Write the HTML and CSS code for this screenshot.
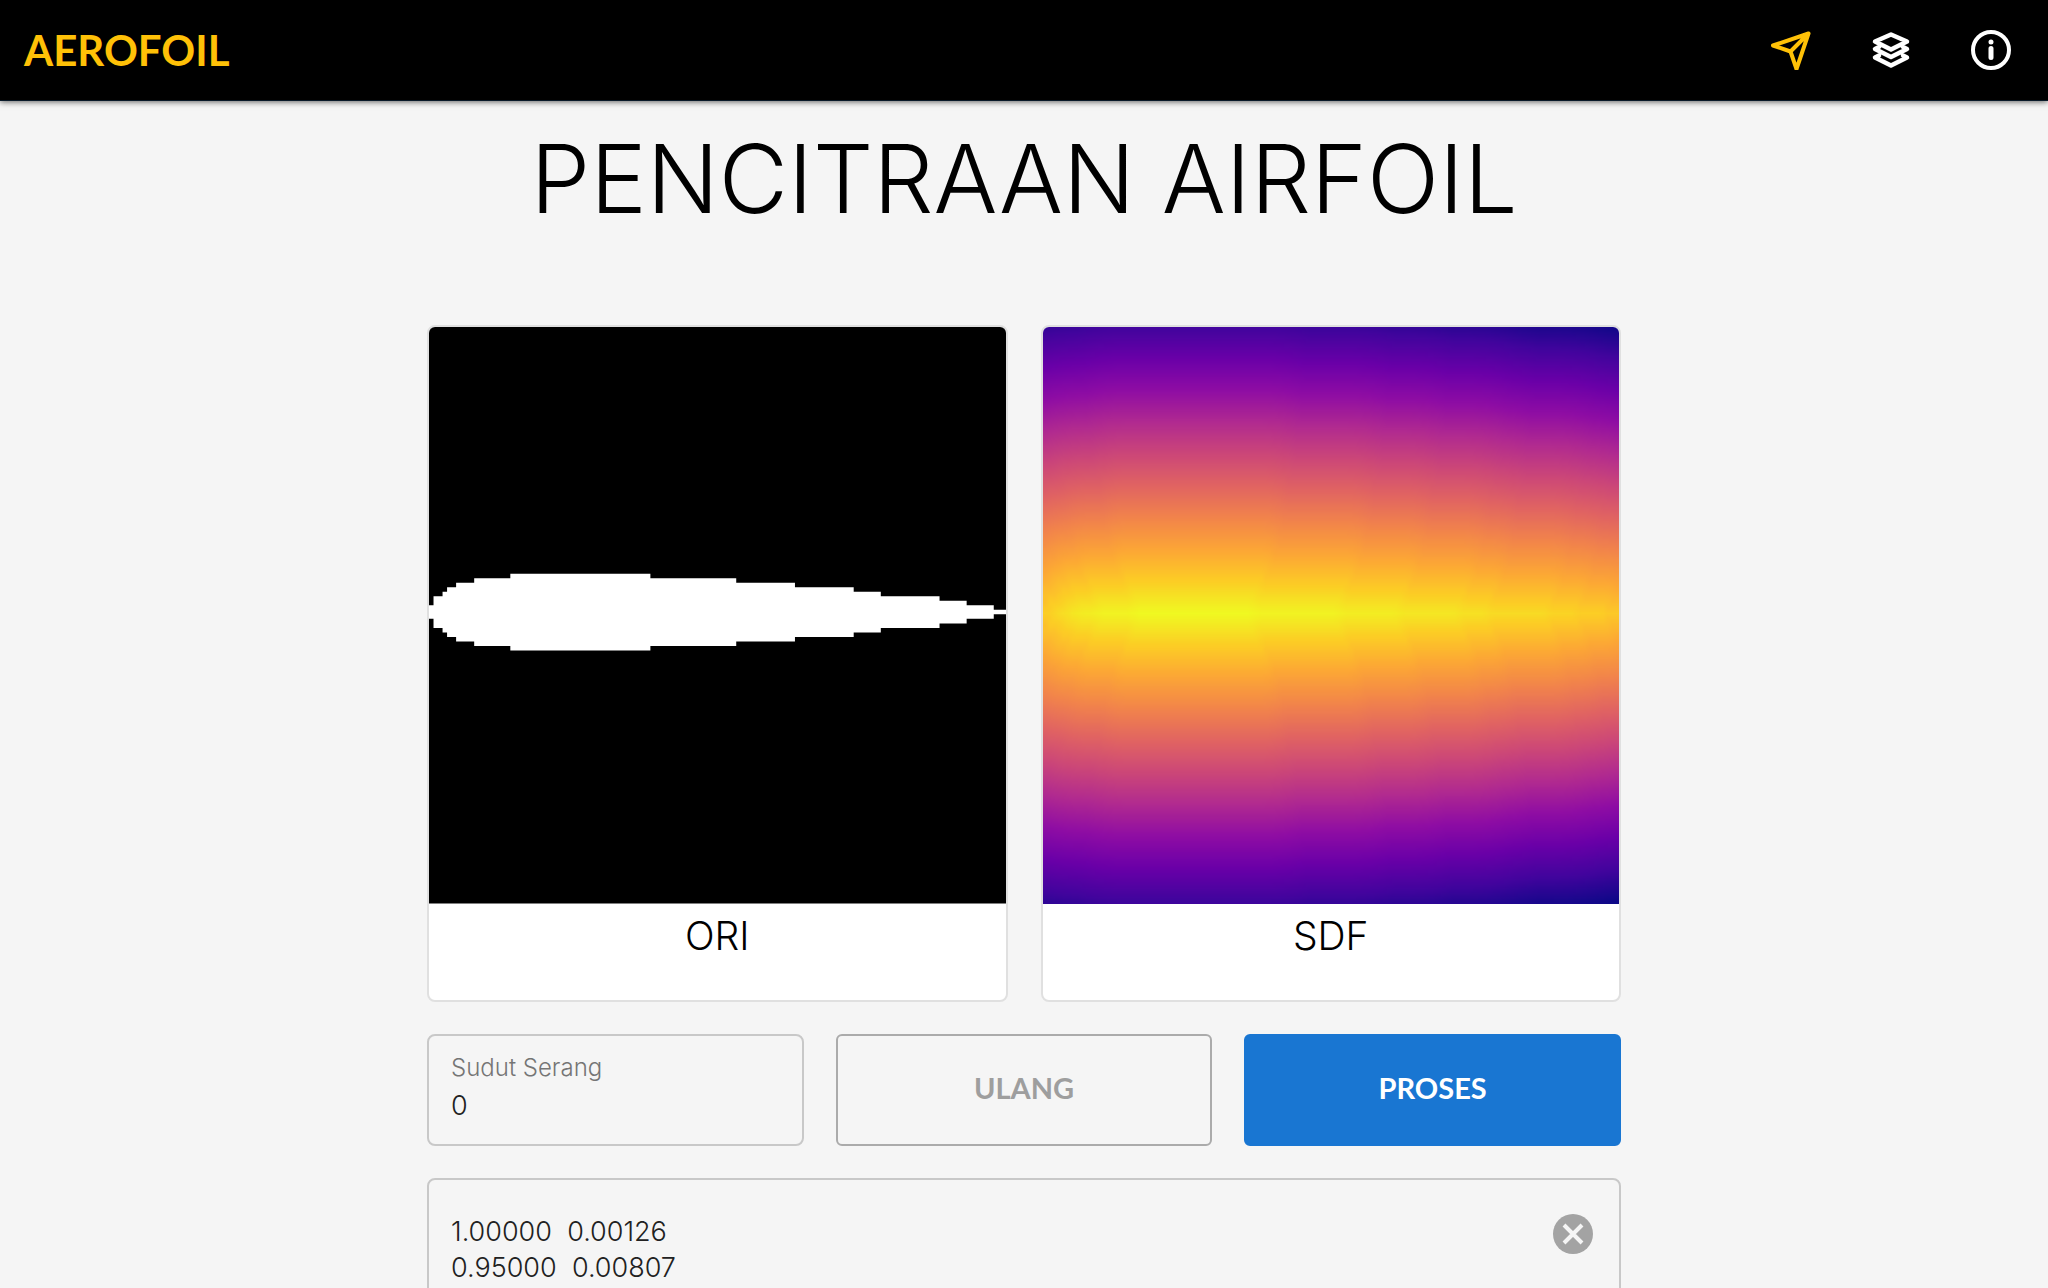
FILE: index.html
```html
<!DOCTYPE html>
<html lang="id">
<head>
<meta charset="utf-8">
<meta name="viewport" content="width=device-width, initial-scale=1">
<title>Aerofoil</title>
<link rel="stylesheet" href="styles.css">
</head>
<body>
<header class="topbar">
  <a class="brand" href="#">AEROFOIL</a>
  <nav class="nav">
    <a class="nav-link active" href="#proses" aria-label="Proses">
      <svg class="icon" viewBox="0 0 40 40"><path d="M37.500 3.500 2 15.500 19.500 21.500 25.500 39ZM19.500 21.500 37.500 3.500"/></svg>
    </a>
    <a class="nav-link" href="#lapisan" aria-label="Lapisan">
      <svg class="icon layers" viewBox="0 0 40 40"><path d="M20 4.500 36 11.500 20 19.500 4 11.500ZM8 17 4 19 20 27 36 19 32 17M8 25.500 4 27.500 20 35.500 36 27.500 32 25.500"/></svg>
    </a>
    <a class="nav-link" href="#info" aria-label="Info">
      <svg class="icon" viewBox="0 0 40 40"><circle cx="20" cy="20" r="18"/><path class="stem" d="M20 18.500V27.500M20 12V12.100"/></svg>
    </a>
  </nav>
</header>
<main class="content">
  <h1 class="title">PENCITRAAN AIRFOIL</h1>
  <section class="cards">
    <figure class="card">
      <svg class="plot" viewBox="0 0.400 127.600 127.600" role="img" aria-label="Airfoil">
        <rect width="128" height="128"/>
        <path class="foil" d="M0 62H1V60H3V59H4V58H6V57H10V56H18V55H49V56H68V57H81V58H94V59H100V60H113V61H119V62H125V63H128V64H125V65H119V66H113V67H100V68H94V69H81V70H68V71H49V72H18V71H10V70H6V69H4V68H3V67H1V65H0Z"/>
      </svg>
      <figcaption class="caption">ORI</figcaption>
    </figure>
    <figure class="card">
      <canvas class="plot" id="sdf" width="128" height="128"></canvas>
      <figcaption class="caption">SDF</figcaption>
    </figure>
  </section>
  <form class="controls">
    <div class="field">
      <label class="field-label" for="sudut">Sudut Serang</label>
      <input class="field-input" id="sudut" type="text" value="0">
    </div>
    <button class="button outline" type="button">ULANG</button>
    <button class="button primary" type="button">PROSES</button>
    <div class="coords">
      <textarea class="coords-input" aria-label="Koordinat" rows="4">1.00000  0.00126
0.95000  0.00807</textarea>
      <button class="clear" type="button" aria-label="Hapus">
        <svg class="clear-icon" viewBox="0 0 40 40"><circle cx="20" cy="20" r="20"/><path d="M11 11 29 29M29 11 11 29"/></svg>
      </button>
    </div>
  </form>
</main>
<script src="sdf.js"></script>
</body>
</html>
```
FILE: styles.css
```css
* { box-sizing: border-box; }
body {
  margin: 0;
  background: #f5f5f5;
  color: #000;
  font-family: Inter, Lato, sans-serif;
  font-size: 27px;
  font-weight: 300;
}
.topbar {
  display: flex;
  align-items: center;
  justify-content: space-between;
  height: 101px;
  padding: 0 37px 0 24px;
  background: #000;
  border-bottom: 1px solid #0a1a2a;
  box-shadow: 0 1px 6px rgba(0, 0, 0, .6);
}
.brand {
  color: #ffc107;
  font-family: Lato, sans-serif;
  font-size: 42px;
  font-weight: 700;
  text-decoration: none;
}
.nav { display: flex; gap: 60px; }
.nav-link { display: flex; color: #fff; }
.nav-link.active { color: #ffc107; }
.icon {
  width: 40px;
  height: 40px;
  fill: none;
  stroke: currentColor;
  stroke-width: 4;
  stroke-linecap: round;
  stroke-linejoin: round;
}
.icon.layers { stroke-width: 4.500; }
.stem { stroke-width: 5; }
.content {
  width: calc(100% - 48px);
  max-width: 1194px;
  margin: 0 auto;
}
.title {
  margin: 0;
  padding: 30px 0 98px;
  font-size: 95px;
  font-weight: 300;
  line-height: 96px;
  text-align: center;
}
.cards { display: grid; grid-template-columns: 1fr 1fr; gap: 33px; }
.card {
  margin: 0;
  overflow: hidden;
  background: #fff;
  border: 2px solid #e0e0e0;
  border-radius: 8px;
}
.plot { display: block; width: 100%; aspect-ratio: 1; }
.foil { fill: #fff; }
.caption {
  padding: 8px 0 40px;
  font-size: 39px;
  line-height: 48px;
  text-align: center;
}
.controls {
  display: grid;
  grid-template-columns: repeat(3, 1fr);
  gap: 32px;
  margin-top: 32px;
}
.field {
  display: flex;
  flex-direction: column;
  height: 112px;
  padding: 14px 22px;
  border: 2px solid #c8c8c8;
  border-radius: 8px;
}
.field-label { color: #757575; font-size: 24px; line-height: 36px; }
.field-input {
  width: 100%;
  padding: 0;
  border: 0;
  outline: 0;
  background: none;
  color: #212121;
  font: inherit;
  line-height: 40px;
}
.button {
  height: 112px;
  padding: 0 16px 4px;
  border: 2px solid #ababab;
  border-radius: 6px;
  background: none;
  color: #9e9e9e;
  font-family: Lato, sans-serif;
  font-size: 29px;
  font-weight: 700;
}
.button.primary { border-color: #1976d2; background: #1976d2; color: #fff; }
.coords {
  grid-column: 1 / -1;
  display: flex;
  align-items: flex-start;
  padding: 34px 26px 0 22px;
  border: 2px solid #c8c8c8;
  border-radius: 8px;
}
.coords-input {
  flex: 1;
  padding: 0;
  border: 0;
  outline: 0;
  resize: none;
  background: none;
  color: #212121;
  font: inherit;
  line-height: 36px;
}
.clear { display: flex; padding: 0; border: 0; background: none; }
.clear-icon { width: 40px; height: 40px; fill: #a3a3a3; stroke: #f5f5f5; stroke-width: 4; }
.clear-icon circle { stroke: none; }
```
FILE: sdf.js
```js
// Signed distance field of the airfoil mask, coloured with the plasma map.
const N = 128;
const CENTER = 63;
// [first column, half height in rows] for each step of the outline
const STEPS = [[0, 1], [1, 3], [3, 4], [4, 5], [6, 6], [10, 7], [18, 8], [49, 7],
  [68, 6], [81, 5], [94, 4], [100, 3], [113, 2], [119, 1], [125, 0]];
const PLASMA = [[13, 8, 135], [65, 4, 157], [106, 0, 168], [143, 13, 164],
  [177, 42, 144], [204, 71, 120], [225, 100, 98], [242, 132, 75],
  [252, 166, 54], [252, 206, 37], [240, 249, 33]];

const half = [];
for (let x = 0; x < N; x++) half.push(STEPS.filter(s => s[0] <= x).pop()[1]);

function distance(x, y) {
  const inside = Math.abs(y - CENTER) <= half[x];
  let best = Infinity;
  for (let c = 0; c < N; c++) {
    const dx = c - x;
    const off = Math.abs(y - CENTER);
    const dy = inside ? Math.max(0, half[c] + 0.5 - off) : Math.max(0, off - half[c] - 0.5);
    best = Math.min(best, Math.hypot(dx, dy));
  }
  return inside ? best : -best;
}

const field = [];
for (let y = 0; y < N; y++) for (let x = 0; x < N; x++) field.push(distance(x, y));
const lo = Math.min(...field);
const hi = Math.max(...field);

const ctx = document.getElementById('sdf').getContext('2d');
const image = ctx.createImageData(N, N);
field.forEach((v, i) => {
  const t = (v - lo) / (hi - lo) * 10;
  const k = Math.min(9, Math.floor(t));
  for (let c = 0; c < 3; c++) {
    image.data[i * 4 + c] = PLASMA[k][c] + (PLASMA[k + 1][c] - PLASMA[k][c]) * (t - k);
  }
  image.data[i * 4 + 3] = 255;
});
ctx.putImageData(image, 0, 0);
```
